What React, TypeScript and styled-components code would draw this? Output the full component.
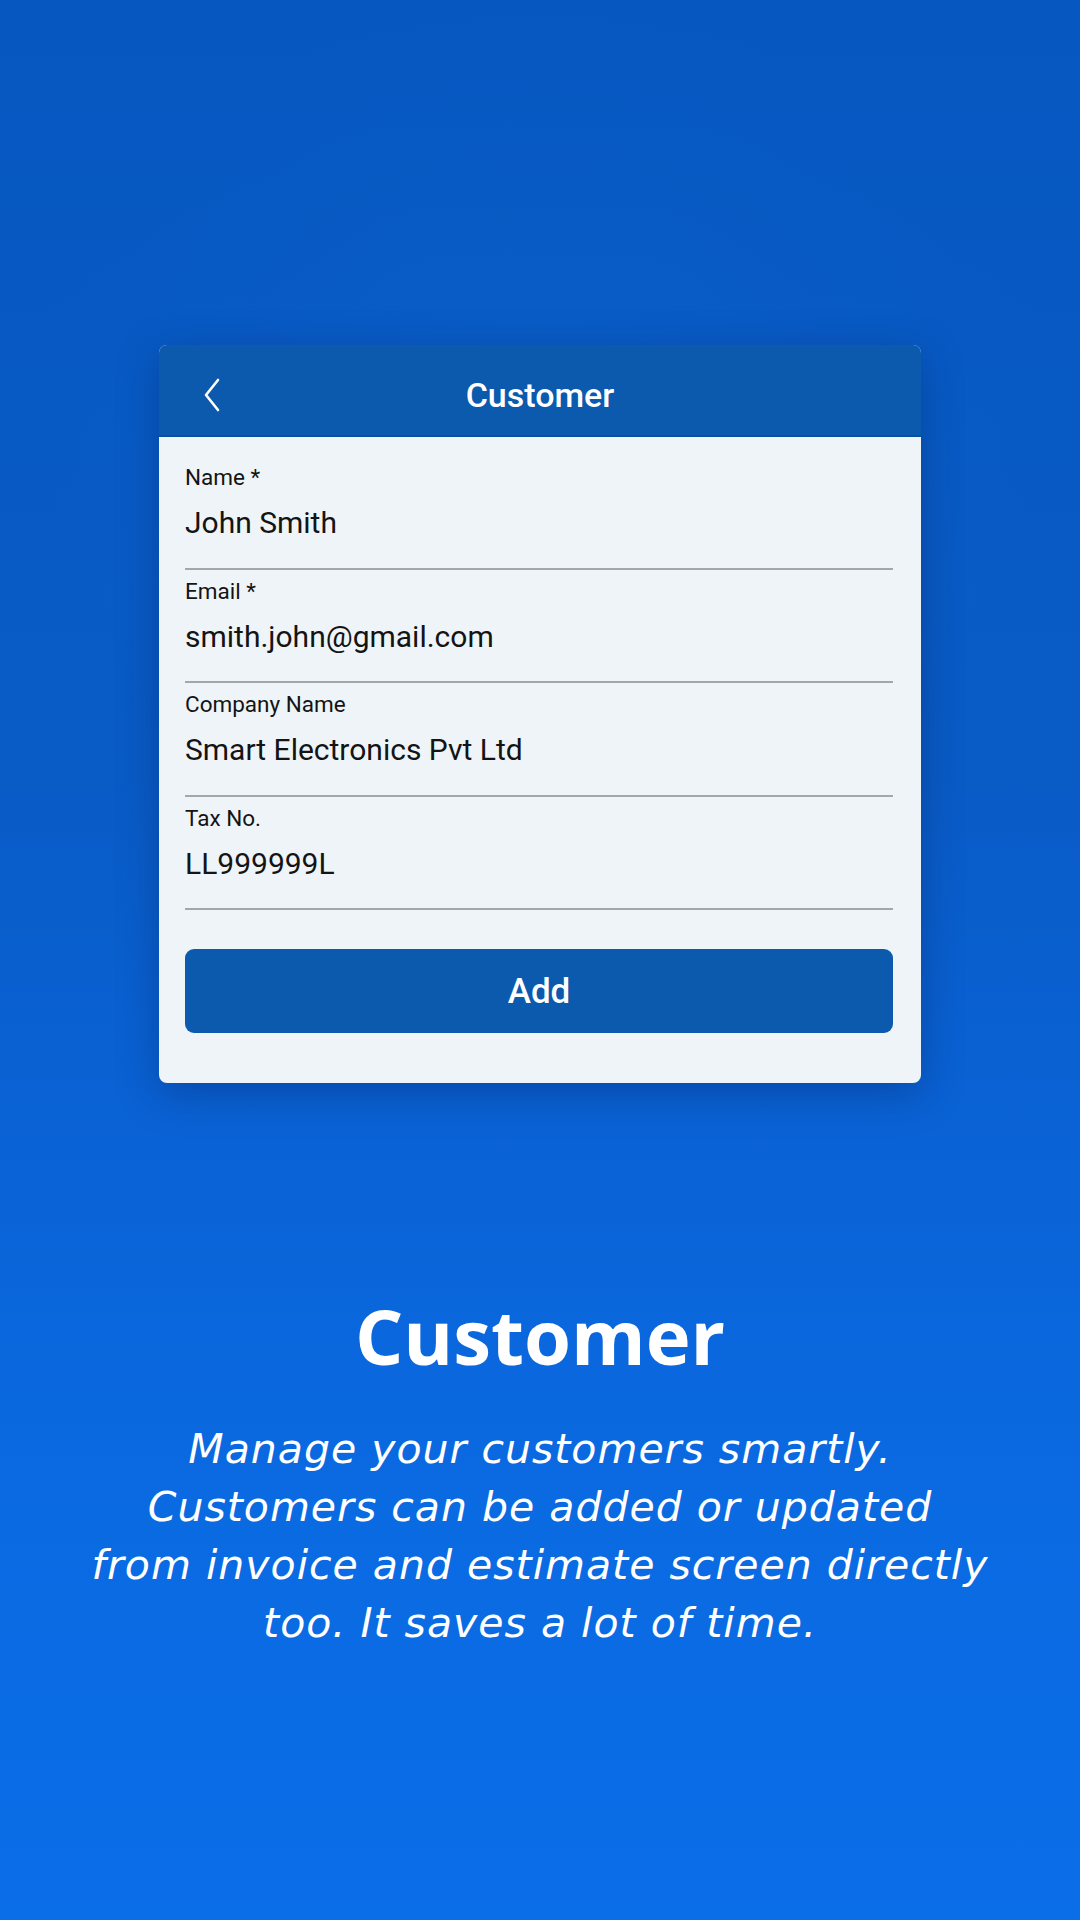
import React from "react";
import styled, { createGlobalStyle } from "styled-components";

const Global = createGlobalStyle`
  html, body { margin: 0; padding: 0; }
  body { font-family: Roboto, "Liberation Sans", sans-serif; }
  * { box-sizing: border-box; }
`;

const Page = styled.div`
  width: 1080px;
  height: 1920px;
  overflow: hidden;
  display: flex;
  flex-direction: column;
  align-items: center;
  padding-top: 345px;
  background:
    radial-gradient(ellipse 520px 420px at 50% 22%, rgba(20, 110, 220, 0.18), rgba(20, 110, 220, 0) 100%),
    linear-gradient(180deg, #0657c0 0%, #095bc6 40%, #0a63d6 60%, #0a6ae2 78%, #0a6ee8 100%);
`;

const Card = styled.div`
  width: 762px;
  border-radius: 8px;
  overflow: hidden;
  background: #eff4f8;
  box-shadow: 0 10px 40px rgba(0, 30, 90, 0.35);
`;

const Header = styled.div`
  position: relative;
  height: 92px;
  padding-top: 10px;
  background: #0b5aad;
  display: flex;
  align-items: center;
  justify-content: center;
  border-bottom: 2px solid #0a50a0;
`;

const BackButton = styled.div`
  position: absolute;
  left: 44px;
  top: 50%;
  transform: translateY(-50%);
  margin-top: 5px;
  display: flex;
  align-items: center;
`;

const HeaderTitle = styled.div`
  font-family: Roboto, "Liberation Sans", sans-serif;
  font-weight: 500;
  font-size: 34px;
  color: #ffffff;
`;

const Form = styled.div`
  padding: 19px 28px 50px 26px;
  display: flex;
  flex-direction: column;
`;

const Field = styled.div`
  padding-top: 9px;
  padding-bottom: 27.6px;
  border-bottom: 2px solid #a3a7ab;
`;

const Label = styled.div`
  font-size: 22.5px;
  line-height: 24px;
  color: #141414;
`;

const Value = styled.div`
  margin-top: 17px;
  font-size: 30px;
  line-height: 34px;
  color: #141414;
`;

const AddButton = styled.button`
  margin-top: 39px;
  height: 84px;
  width: 100%;
  border: none;
  border-radius: 9px;
  background: #0b5aad;
  color: #ffffff;
  font-family: Roboto, "Liberation Sans", sans-serif;
  font-weight: 500;
  font-size: 35px;
`;

const Title = styled.h1`
  margin: 208px 0 0 0;
  font-family: "Open Sans", "Noto Sans", sans-serif;
  font-weight: 700;
  font-size: 76px;
  line-height: 90px;
  color: #ffffff;
  text-align: center;
`;

const Description = styled.p`
  margin: 39px 0 0 0;
  font-family: "DejaVu Sans", "Open Sans", sans-serif;
  font-style: italic;
  font-weight: 400;
  font-size: 41px;
  letter-spacing: 1px;
  line-height: 58px;
  color: #ffffff;
  text-align: center;
  white-space: nowrap;
`;

const fields = [
  { label: "Name *", value: "John Smith" },
  { label: "Email *", value: "smith.john@gmail.com" },
  { label: "Company Name", value: "Smart Electronics Pvt Ltd" },
  { label: "Tax No.", value: "LL999999L" },
];

export default function App() {
  return (
    <>
      <Global />
      <Page>
        <Card>
          <Header>
            <BackButton>
              <svg width="18" height="34" viewBox="0 0 18 34" fill="none">
                <polyline
                  points="15,2 3,17 15,32"
                  stroke="#ffffff"
                  strokeWidth="2.6"
                  strokeLinecap="round"
                  strokeLinejoin="round"
                />
              </svg>
            </BackButton>
            <HeaderTitle>Customer</HeaderTitle>
          </Header>
          <Form>
            {fields.map((f) => (
              <Field key={f.label}>
                <Label>{f.label}</Label>
                <Value>{f.value}</Value>
              </Field>
            ))}
            <AddButton>Add</AddButton>
          </Form>
        </Card>
        <Title>Customer</Title>
        <Description>
          Manage your customers smartly.
          <br />
          Customers can be added or updated
          <br />
          from invoice and estimate screen directly
          <br />
          too. It saves a lot of time.
        </Description>
      </Page>
    </>
  );
}
